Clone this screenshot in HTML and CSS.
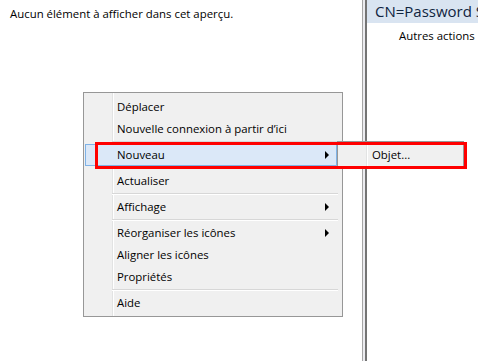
FILE: index.html
```html
<!DOCTYPE html>
<html lang="fr">
<head>
    <meta charset="UTF-8">
    <title>Aperçu</title>
    <link rel="stylesheet" href="styles.css">
</head>
<body>
    <div class="window">
        <div class="pane-left">
            <div class="empty">Aucun élément à afficher dans cet aperçu.</div>
        </div>
        <div class="splitter"></div>
        <div class="pane-right">
            <div class="actions-title">CN=Password S</div>
            <div class="actions-link">Autres actions</div>
        </div>
    </div>

    <div class="menu">
        <div class="item">Déplacer</div>
        <div class="item">Nouvelle connexion à partir d’ici</div>
        <div class="sep"></div>
        <div class="item active"><span class="label">Nouveau</span><span class="arrow"></span></div>
        <div class="sep"></div>
        <div class="item">Actualiser</div>
        <div class="sep"></div>
        <div class="item"><span class="label">Affichage</span><span class="arrow"></span></div>
        <div class="sep"></div>
        <div class="item"><span class="label">Réorganiser les icônes</span><span class="arrow"></span></div>
        <div class="item">Aligner les icônes</div>
        <div class="item">Propriétés</div>
        <div class="sep"></div>
        <div class="item">Aide</div>
    </div>

    <div class="menu submenu">
        <div class="item">Objet...</div>
    </div>

    <div class="highlight-box"></div>
</body>
</html>
```

FILE: styles.css
```css
body {
    margin: 0;
    font-family: "Open Sans", "Noto Sans", sans-serif;
    font-size: 11.4px;
    color: #000;
    background: #fff;
}
.window {
    display: flex;
    height: 361px;
}
.pane-left {
    width: 362px;
}
.empty {
    padding: 6px 10px;
    line-height: 16px;
}
.splitter {
    width: 2px;
    background: #ececf0;
    border-left: 1px solid #a5a5a5;
    border-right: 2px solid #747474;
}
.pane-right {
    flex: 1;
    overflow: hidden;
    white-space: nowrap;
}
.actions-title {
    height: 23px;
    line-height: 23px;
    padding-left: 8px;
    background: #d9e4f1;
    color: #10243f;
    font-size: 15px;
}
.actions-link {
    padding: 2px 0 0 32px;
    line-height: 22px;
}

/* menu contextuel */
.menu {
    position: absolute;
    left: 83px;
    top: 92px;
    width: 254px;
    padding: 3px 2px 2px;
    border: 1px solid #979797;
    background: #f0f0f0 linear-gradient(to right, transparent 28px, #e2e3e3 28px, #e2e3e3 29px, #fff 29px, #fff 30px, transparent 30px);
}
.item {
    display: flex;
    align-items: center;
    height: 22px;
    line-height: 22px;
    padding-left: 31px;
    white-space: nowrap;
}
.label {
    flex: 1;
}
.arrow {
    width: 0;
    height: 0;
    margin-right: 11px;
    border-top: 4px solid transparent;
    border-bottom: 4px solid transparent;
    border-left: 4px solid #000;
}
.item.active {
    height: 20px;
    line-height: 20px;
    margin: 0 3px 0 -1px;
    background: #dbe8f8;
    border: 1px solid #7fb2e6;
}
.item.active .arrow {
    margin-right: 7px;
}
.sep {
    margin: 1px 2px 1px 26px;
    border-top: 1px solid #d7d7d7;
    border-bottom: 1px solid #fff;
}
.submenu {
    left: 337px;
    top: 141px;
    width: 121px;
    padding: 2px;
}
.submenu .item {
    padding-left: 32px;
}
.highlight-box {
    position: absolute;
    left: 95px;
    top: 142px;
    width: 366px;
    height: 21px;
    border: 3px solid #f00;
}
```
